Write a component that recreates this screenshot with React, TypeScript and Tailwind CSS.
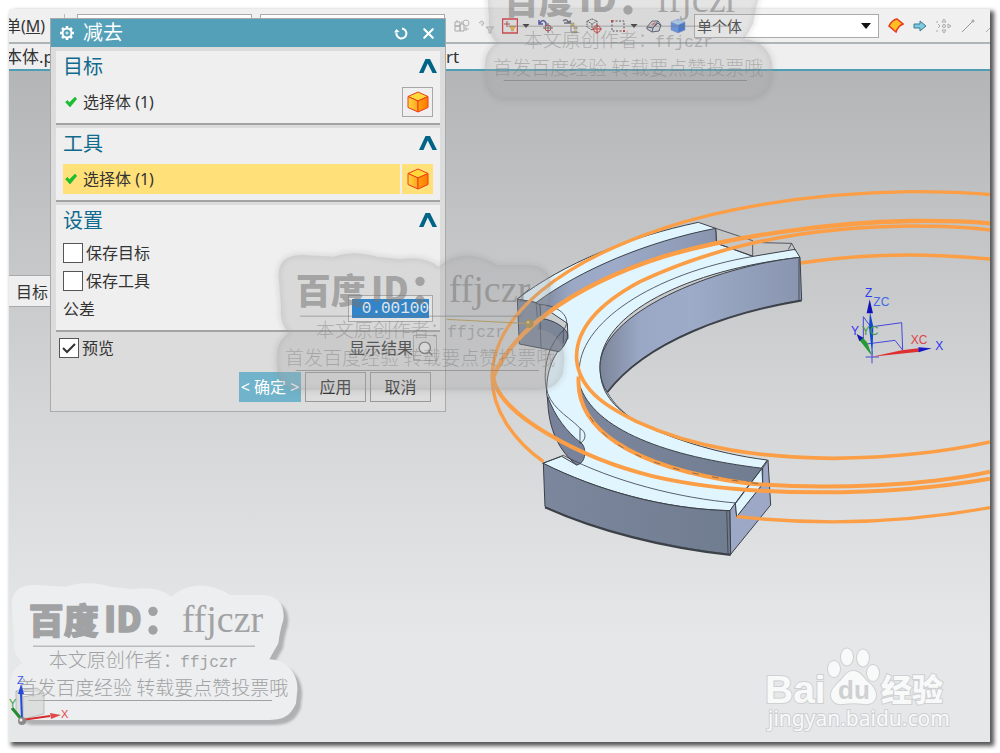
import type { ReactNode } from 'react'
import { Search, X } from 'lucide-react'

const ToolButton = ({ label, caret, children }: { label: string; caret?: boolean; children: ReactNode }) => {
  return (
    <button aria-label={label} className="flex items-center gap-1 shrink-0">
      <svg viewBox="0 0 16 16" className="size-4" fill="none">{children}</svg>
      {caret && <svg viewBox="0 0 7 4" className="w-2 h-1" fill="#222"><path d="M0 0h7L3.5 4z" /></svg>}
    </button>
  )
}

const Cube = () => (
  <svg viewBox="0 0 22 22" className="size-[22px]" stroke="#ee3c1c" strokeWidth="1" strokeLinejoin="round">
    <defs>
      <linearGradient id="cube-left"><stop stopColor="#ffd640" /><stop offset="1" stopColor="#ffa51c" /></linearGradient>
      <linearGradient id="cube-right"><stop stopColor="#ffa010" /><stop offset="1" stopColor="#ff7a00" /></linearGradient>
    </defs>
    <path d="M11 1 21 5.500 11 10 1 5.500z" fill="#ffd83a" />
    <path d="M1 5.500 11 10V21L1 16.500z" fill="url(#cube-left)" />
    <path d="M21 5.500 11 10V21l10-4.500z" fill="url(#cube-right)" />
  </svg>
)

const Tick = () => (
  <svg viewBox="0 0 12 11" className="w-3 h-3 ml-0.5 shrink-0">
    <path d="M.5 5.500 2.500 4 4.500 6 10 .500 11.700 2.500 5 10.500z" fill="#17c22e" stroke="#10a827" strokeWidth=".5" />
  </svg>
)

const Section = ({ title, children }: { title: string; children: ReactNode }) => {
  return (
    <section className="bg-[#efefef] border-b-2 border-[#a3a3a3] px-[7px]">
      <h2 className="flex items-start justify-between h-8 text-[20px] leading-8 text-[#0f6a8d]">
        {title}
        <button aria-label={title} className="mt-2 -mr-1">
          <svg viewBox="0 0 18 14" className="block w-[18px] h-[14px]" fill="#006487"><path d="M0 14 6.500 0h4.500L18 14h-4.500L8.700 4.500 4.500 14z" /></svg>
        </button>
      </h2>
      {children}
    </section>
  )
}

const Watermark = ({ place, solid }: { place: string; solid?: boolean }) => {
  const edge = 'M35 110C35 60 60 45 110 45L200 50Q260 30 330 50L400 58Q470 45 515 80Q560 40 620 48Q660 55 690 75L790 75C840 80 855 110 850 150Q840 180 835 220L808 268C860 270 895 310 892 360L888 400C870 440 850 450 800 450L80 450C40 440 25 400 30 340C30 310 50 290 65 278C40 250 40 220 42 200Z'
  return (
    <svg viewBox="0 0 960 549" className={`absolute w-80 h-[183px] pointer-events-none ${place}`}>
      {solid
        ? <g><path d={edge} fill="#b0b1b3" transform="translate(14 15)" className="blur-[3px]" /><path d={edge} fill="#edeeef" /></g>
        : <g><path d={edge} fill="none" stroke="#808080" strokeOpacity=".16" strokeWidth="14" className="blur-[6px]" /><path d={edge} fill="#a4a4a4" fillOpacity=".3" /></g>}
      <g fill={solid ? '#a1a2a4' : '#777'} fillOpacity={solid ? 1 : 0.55}>
        <g fontSize="105" fontWeight="900" className="font-['Noto_Sans_CJK_SC',sans-serif]" stroke={solid ? '#a1a2a4' : 'none'} strokeWidth="4" strokeLinejoin="round">
          <text x="86" y="192">百度</text>
          <text x="312" y="187">ID</text>
        </g>
        <circle cx="459" cy="124" r="14" />
        <circle cx="459" cy="180" r="14" />
        <text x="545" y="187" fontSize="114" className="font-['Liberation_Serif',serif]">ffjczr</text>
        <rect x="99" y="227" width="666" height="3" />
        <rect x="86" y="390" width="730" height="3" />
        <g fontSize="57" fontWeight="300" fillOpacity={solid ? 1 : 0.45} className="font-['Noto_Sans_CJK_SC',sans-serif]">
          <text x="146" y="292">本文原创作者：</text>
          <text x="541" y="292" fontSize="48" className="font-['Liberation_Mono',monospace]">ffjczr</text>
          <text x="54" y="375">首发百度经验 转载要点赞投票哦</text>
        </g>
      </g>
    </svg>
  )
}

const Model = () => {
  return (
    <svg viewBox="0 0 981 671" preserveAspectRatio="xMidYMid slice" className="absolute inset-0 size-full" fill="none">
      <defs>
        <linearGradient id="wall"><stop stopColor="#7c8599" /><stop offset=".2" stopColor="#9aa8c5" /><stop offset=".45" stopColor="#9dabc8" /><stop offset="1" stopColor="#8995af" /></linearGradient>
        <linearGradient id="front"><stop stopColor="#7c879d" /><stop offset="1" stopColor="#707c90" /></linearGradient>
      </defs>
      <g transform="translate(471 109) scale(.33333)" strokeLinejoin="round">
        <path d="M962 249C1070 232 1180 225 1290 225C1380 225 1460 231 1530 237" stroke="#fb9e46" strokeWidth="10" />
        {/* body */}
        <g stroke="#3c4148" strokeWidth="3">
          <path d="M655 127C450 170 250 250 112 357L170 368L262 430L264 475C235 510 198 550 200 640C210 720 250 780 305 790L290 855L245 829L188 850C350 930 550 987 750 992L862 840C700 820 560 770 470 725C400 680 360 640 360 560C360 400 620 270 960 232L945 208L820 229L710 190L707 145Z" fill="#e1f5fe" />
          <path d="M168 368C300 270 500 185 707 145L709 187C520 225 330 310 200 400L180 415Z" fill="url(#wall)" />
          <path d="M112 358 165 367 180 375 182 415C220 420 255 440 263 462C264 480 252 500 237 515L118 492Z" fill="#7c8699" />
          <path d="M168 368 172 412M180 415 183 502M250 450 250 490" strokeWidth="2" />
          <path d="M960 232C700 260 360 400 360 560C360 595 370 620 382 637C500 480 750 395 965 360Z" fill="url(#wall)" />
          <path d="M298 612C340 750 560 830 848 865L846 912C600 880 400 830 330 710C305 670 295 640 298 612Z" fill="url(#front)" />
          <path d="M203 650C225 710 260 755 303 789C320 800 320 850 290 855C240 815 203 750 203 650Z" fill="#78829a" />
          <path d="M190 850C350 930 550 988 750 992L752 1123C550 1100 350 1050 195 980Z" fill="url(#front)" />
          <path d="M750 992 766 969 770 1010 848 912 848 864 864 840 872 975 752 1123Z" fill="#9ca8c5" />
          <path d="M766 969 846 865 848 912 770 1010Z" fill="#e1f5fe" />
        </g>
        <g stroke="#3c4148" strokeWidth="2.500">
          <path d="M180 373C230 378 262 400 260 430C255 455 235 455 210 510C195 550 190 600 203 640C220 690 280 720 300 745V790M300 745C320 755 320 780 300 790" />
          <path d="M820 229C520 280 290 430 298 580V615" />
          <path d="M707 145 818 182V229L710 190M845 188 935 190 925 208M935 190 945 208V212M957 235V360" />
          <path d="M188 850 250 826C400 905 600 955 768 969M740 990 744 1120M846 865 768 969M112 357 150 325" />
          <path d="M195 982C350 1052 550 1104 752 1125" strokeWidth="6" />
          <path d="M382 637C500 482 750 398 965 362" strokeWidth="5" />
          <path d="M382 637C400 670 435 705 470 725" />
        </g>
        {/* cutting ring */}
        <g stroke="#fb9e46" strokeWidth="10">
          <path d="M1530 44C1450 36 1370 35 1290 35C950 40 700 95 550 145C250 245 40 400 36 590C36 690 100 780 190 845" />
          <path d="M1530 130C1450 123 1370 122 1290 123C1050 127 750 170 550 230C250 325 90 470 40 590" strokeWidth="13" />
          <path d="M40 590C50 700 300 835 520 889C680 926 850 937 1020 937C1200 937 1380 922 1530 896" strokeWidth="12" />
          <path d="M1530 150C1450 140 1370 138 1290 138C900 142 650 225 480 305C340 380 285 460 290 540C300 640 400 690 470 725C650 808 850 833 1060 835C1230 833 1400 815 1530 786" strokeWidth="11" />
          <path d="M296 590C285 740 440 860 800 910C1050 932 1350 915 1530 875" strokeWidth="12" />
          <path d="M770 1010C1050 1040 1300 1025 1530 983" />
        </g>
        <path d="M330 710C400 830 600 885 846 912" stroke="#555" strokeWidth="2" strokeDasharray="20 40" />
        <path d="M-100 418 148 431" stroke="#b4974a" strokeWidth="3" />
        <circle cx="148" cy="431" r="13" fill="#a88c42" />
        <circle cx="144" cy="427" r="4" fill="#d8c38a" />
        {/* coordinate system */}
        <g stroke="#4646dc" strokeWidth="3">
          <path d="M1178 440 1265 428 1268 510 1245 481 1160 492 1150 485V410L1168 435M1157 531H1197M1176 513V550" />
        </g>
        <path d="M1170 395 1180 440 1177 530 1167 440Z" fill="#1048d0" />
        <path d="M1169 358 1179 400H1160Z" fill="#1212b8" />
        <path d="M1176 530 1265 511 1315 505 1318 515Z" fill="#de3030" />
        <path d="M1315 502 1355 505 1316 517Z" fill="#1616c8" />
        <path d="M1176 528 1138 480 1149 473 1162 488Z" fill="#279a35" />
        <path d="M1130 462 1150 473 1138 484Z" fill="#1616a8" />
        <g fontSize="36" className="font-['Liberation_Sans',sans-serif]">
          <text x="1155" y="351" fill="#2e3cf0">Z</text>
          <text x="1180" y="378" fill="#3f68e8">ZC</text>
          <text x="1113" y="465" fill="#3333f0">Y</text>
          <text x="1145" y="465" fill="#3f9a48">YC</text>
          <text x="1292" y="491" fill="#dc4545">XC</text>
          <text x="1366" y="511" fill="#3333f0">X</text>
        </g>
      </g>
    </svg>
  )
}

const CornerAxes = () => (
  <svg viewBox="0 0 70 60" className="absolute left-[9px] bottom-[18px] w-[70px] h-[60px] overflow-hidden">
    <path d="M7 16 28 13 35 18V39L14 44 7 38Z M7 16 14 22 35 18M14 22V44" fill="#ccc" fillOpacity=".5" stroke="#aaa" strokeWidth=".7" />
    <path d="M13 45 12 18" stroke="#2448d8" strokeWidth="2" />
    <path d="m12 9 3 10H9z" fill="#2448d8" />
    <path d="m13 45-10-12" stroke="#238a32" strokeWidth="3" />
    <path d="m13 45 28-4" stroke="#d82c2c" strokeWidth="2" />
    <path d="m41 38 11 2-10 4z" fill="#e04a4a" />
    <circle cx="13" cy="46" r="4" fill="#8a8a8a" />
    <circle cx="12" cy="45" r="1.500" fill="#eee" />
    <g fontSize="11" className="font-['Liberation_Sans',sans-serif]">
      <text x="8" y="9" fill="#3656f0">Z</text>
      <text x="0" y="32" fill="#36a044">Y</text>
      <text x="52" y="43" fill="#e64848">X</text>
    </g>
  </svg>
)

const BaiduLogo = () => (
  <svg viewBox="0 0 200 90" className="absolute right-[34px] bottom-[10px] w-[200px] h-[90px]" fill="#f8f9f9" stroke="#cfd0d2" strokeWidth="2" paintOrder="stroke">
    <ellipse cx="78" cy="27" rx="6" ry="8" />
    <ellipse cx="91" cy="15" rx="6" ry="8.500" />
    <ellipse cx="107" cy="16" rx="6" ry="8.500" />
    <ellipse cx="117" cy="31" rx="6" ry="8" />
    <path d="M97 29c8 0 10 7 15 11 5 4 8 8 8 13 0 7-6 10-12 9-7-1-14-1-21 0-7 1-12-3-12-9 0-5 4-9 8-13 5-4 7-11 14-11z" />
    <g className="font-['Noto_Sans_CJK_SC',sans-serif]" fontWeight="700">
      <text x="9" y="61" fontSize="39" className="font-['Liberation_Sans',sans-serif]">Bai</text>
      <text x="82" y="57" fontSize="26" fill="#cfd0d2" stroke="none" className="font-['Liberation_Sans',sans-serif]">du</text>
      <text x="125" y="59" fontSize="31" fontWeight="900">经验</text>
    </g>
    <text x="12" y="84" fontSize="21" className="font-['Noto_Sans',sans-serif]">jingyan.baidu.com</text>
  </svg>
)

const Dialog = () => {
  return (
    <div role="dialog" aria-label="减去" className="absolute left-[41px] top-[9px] w-[396px] bg-[#dcdcdc] border border-[#a8aaab] text-[16px] leading-5 text-[#333]">
      <div className="flex items-center h-7 px-2 bg-[#54a0b9] text-white">
        <svg viewBox="0 0 16 16" className="size-4" fill="none" stroke="#fff">
          <circle cx="8" cy="8" r="4.500" strokeWidth="2" />
          <circle cx="8" cy="8" r="1" strokeWidth="1" />
          <path d="M8 1v2M8 13v2M1 8h2M13 8h2M3 3l1.500 1.500M11.500 11.500 13 13M13 3l-1.500 1.500M4.500 11.500 3 13" strokeWidth="2.500" />
        </svg>
        <h1 className="flex-1 ml-2 text-[20px] leading-7">减去</h1>
        <button aria-label="重置" className="mr-3">
          <svg viewBox="0 0 14 14" className="size-[14px]" fill="none" stroke="#fff" strokeWidth="2"><path d="M8 2.500a5 5 0 1 1-5.500 4" /><path d="M0 6.500 2.500 3 5.500 6z" fill="#fff" stroke="none" /></svg>
        </button>
        <button aria-label="关闭"><X size={17} strokeWidth={3} /></button>
      </div>
      <div className="flex flex-col gap-[3px] px-[5px] pt-1">
        <Section title="目标">
          <div className="flex items-center h-[30px] mt-1 mb-[6px]">
            <Tick />
            <span className="flex-1 ml-[6px]">选择体 (1)</span>
            <button aria-label="选择目标体" className="grid place-items-center w-[31px] h-[30px] border border-[#a8a8a8]"><Cube /></button>
          </div>
        </Section>
        <Section title="工具">
          <div className="flex items-center gap-[2px] h-[30px] mt-1 mb-[6px]">
            <div className="flex flex-1 items-center h-full bg-[#ffe079]">
              <Tick />
              <span className="ml-[6px]">选择体 (1)</span>
            </div>
            <button aria-label="选择工具体" className="grid place-items-center w-[31px] h-full bg-[#ffe079]"><Cube /></button>
          </div>
        </Section>
        <Section title="设置">
          <div className="flex flex-col gap-2 pt-[6px]">
            <label className="flex items-center gap-[3px]"><input type="checkbox" className="appearance-none size-5 border border-[#555] bg-white" />保存目标</label>
            <label className="flex items-center gap-[3px]"><input type="checkbox" className="appearance-none size-5 border border-[#555] bg-white" />保存工具</label>
          </div>
          <div className="flex items-center justify-between mt-1 mb-2">
            <label htmlFor="tolerance">公差</label>
            <div className="w-[85px] h-[27px] p-[3px] border border-[#a8a8a8] bg-white">
              <input id="tolerance" defaultValue="0.00100" className="block w-full h-[19px] bg-[#0078d7] text-white text-right text-[16px] leading-5 font-['Liberation_Mono',monospace]" />
            </div>
          </div>
        </Section>
      </div>
      <div className="flex items-center justify-between h-8 pl-2 pr-2">
        <label className="flex items-center gap-[3px]">
          <span className="relative size-5">
            <input type="checkbox" defaultChecked className="block appearance-none size-5 border border-[#555] bg-white" />
            <svg viewBox="0 0 20 20" className="absolute inset-0 pointer-events-none" fill="none" stroke="#333" strokeWidth="2"><path d="m4 10 4 4 8-8" /></svg>
          </span>
          预览
        </label>
        <div className="flex items-center">
          显示结果
          <button aria-label="显示结果" className="grid place-items-center w-6 h-[26px] border border-[#aaa]"><Search size={17} strokeWidth={2} color="#777" fill="#eee" /></button>
        </div>
      </div>
      <div className="flex justify-end gap-1 mt-2 mb-[9px] pr-[14px]">
        <button className="w-[62px] h-[30px] bg-[#70b3ca] text-white whitespace-nowrap">&lt; 确定 &gt;</button>
        <button className="w-[61px] h-[30px] border border-[#999]">应用</button>
        <button className="w-[61px] h-[30px] border border-[#999]">取消</button>
      </div>
    </div>
  )
}

const Toolbar = () => {
  return (
    <div className="flex items-center h-[35px] border-b-2 border-[#adb5b8] bg-[#f0f0f0] overflow-hidden">
      <button className="w-[55px] -ml-1 text-left text-[16px] shrink-0">单(<u>M</u>)</button>
      <div className="w-px h-6 ml-1 bg-[#bbb] shrink-0" />
      <input aria-label="过滤器" className="w-[175px] h-6 ml-3 border border-[#aaa] bg-white shrink-0" />
      <input aria-label="范围" className="w-[185px] h-6 ml-2 border border-[#aaa] bg-white shrink-0" />
      <div className="flex items-center gap-2 ml-[9px] shrink-0">
        <ToolButton label="装配">
          <path d="M1 4h5v4H1zM1 8h5v5H1zM6 6h4v7H6zM3 2v2M8 3v3" stroke="#aaa" />
          <circle cx="12" cy="5" r="3" stroke="#b5b5b5" /><path d="M12 8v5M10 11h5" stroke="#b5b5b5" />
        </ToolButton>
        <ToolButton label="过滤">
          <path d="M1 5q3-4 5 0L4 8M8 9h8l-3 3v3h-2v-3z" stroke="#b5b5b5" fill="#ddd" />
        </ToolButton>
        <ToolButton label="选择过滤" caret>
          <path d="M.5 1h15v14H.5z" stroke="#d5232f" strokeWidth="1.500" />
          <path d="M5 3v6M2 6h6" stroke="#a33" /><path d="M7 8h7l-2.500 3v2h-2v-2z" fill="#f5b52b" stroke="#b87a18" strokeWidth=".5" />
        </ToolButton>
        <ToolButton label="重置方位">
          <path d="M2 5q3-5 6 0v3M1 2v4h4" stroke="#32389a" strokeWidth="1.500" /><circle cx="10" cy="10" r="3" stroke="#c22" /><path d="M10 5v10M5 10h10" stroke="#555" />
        </ToolButton>
        <ToolButton label="选择优先">
          <path d="M1 3q3-3 5 1l3-1M2 5h7" stroke="#556" strokeWidth="1.500" /><path d="M9 5h3v3H9zM12 9h3v2h-3zM12 13h3v2h-3z" fill="#e8c33c" stroke="#777" strokeWidth=".6" /><path d="M9 8v6h3" stroke="#777" />
        </ToolButton>
        <ToolButton label="旋转点">
          <path d="m6 1 5 2v6l-5 3-5-3V3zM1 3l5 3 5-3M6 6v6" stroke="#333" strokeDasharray="1.500 1" /><circle cx="11" cy="11" r="3.500" stroke="#c22" /><path d="M11 6v10M6 11h10" stroke="#c22" />
        </ToolButton>
        <ToolButton label="矩形选择" caret>
          <path d="M2 3h12v10H2z" stroke="#333" strokeDasharray="2 1.500" /><path d="M1 2h2v2H1zM13 12h2v2h-2z" fill="#d22" />
        </ToolButton>
        <ToolButton label="渲染样式">
          <path d="M1 9 6 3l6 0 3 4-2 6-7 1-5-3z" fill="#d8dbe4" stroke="#444a5c" /><path d="m1 9 6 1 5-7M7 10l-1 4M7 10l5-5 3 3" stroke="#444a5c" /><path d="m7 5 3-1-2 3-3 0z" fill="#d66" />
        </ToolButton>
        <ToolButton label="着色">
          <path d="M8 1 15 4 8 7 1 4z" fill="#a8d4f8" /><path d="M1 4 8 7v8l-7-3z" fill="#4f8cf0" /><path d="m15 4-7 3v8l7-3z" fill="#2468d8" /><path d="M8 1 15 4 8 7 1 4zV4M1 4v8l7 3 7-3V4M8 7v8" stroke="#7a86c8" strokeWidth=".5" />
        </ToolButton>
      </div>
      <div className="relative w-[185px] ml-2 shrink-0">
        <select aria-label="选择范围" className="block appearance-none w-full h-6 pl-0.5 border border-[#aaa] bg-white text-[15px] leading-5 text-[#333]"><option>单个体</option></select>
        <svg viewBox="0 0 10 6" className="absolute right-2 top-[9px] w-[10px] h-[6px] pointer-events-none"><path d="M0 0h10L5 6z" fill="#111" /></svg>
      </div>
      <div className="flex items-center gap-2 ml-[9px] shrink-0">
        <ToolButton label="面"><path d="M1 8Q4 2 9 1l6 5q-5 2-7 8z" fill="#ffbe24" stroke="#e63a1c" strokeWidth="1.500" /></ToolButton>
        <ToolButton label="下一个"><path d="M2 6h6V3l6 5-6 5v-3H2z" fill="#7ecbe0" stroke="#3c7890" /></ToolButton>
        <ToolButton label="移动"><path d="M8 1 10 4H6zM8 15l2-3H6zM15 8l-3-2v4zM4 8 2 6M4 8l-2 2M1 3v2M1 12v2" stroke="#aaa" /><circle cx="8" cy="8" r="1.500" stroke="#aaa" /></ToolButton>
        <ToolButton label="直线"><path d="M2 14 13 3" stroke="#999" /><circle cx="13" cy="3" r="1.500" fill="#aaa" /></ToolButton>
        <ToolButton label="曲线"><path d="M2 14 14 2" stroke="#aaa" /></ToolButton>
      </div>
    </div>
  )
}

const App = () => {
  return (
    <div className="relative min-h-screen flex flex-col overflow-hidden bg-white pt-[9px] pl-[9px] pr-[10px] pb-[11px] text-[#333] font-['Noto_Sans','Noto_Sans_CJK_SC',sans-serif]">
      <div className="relative flex flex-1 flex-col rounded-tl-sm shadow-[3px_3px_4px_1px_#555]">
        <Toolbar />
        <div className="flex items-center h-[27px] border-b-2 border-[#4d9db4] bg-[#efefef] text-[17px] overflow-hidden">
          <span className="w-[426px] -ml-1 shrink-0">本体.p</span>
          <span>.prt</span>
        </div>
        <main className="relative flex-1 overflow-hidden bg-linear-to-b from-[#b4b5b7] via-[#d4d5d7] to-[#e6e7e9] to-85%">
          <Model />
          <div className="absolute left-0 top-[204px] w-[42px] h-8 pl-[7px] border-y border-[#aaa] bg-[#efefef] text-[16px] leading-8">目标</div>
          <BaiduLogo />
        </main>
        <Dialog />
      </div>
      <Watermark place="left-[475px] -top-[50px]" />
      <Watermark place="left-[267px] top-[240px]" />
      <Watermark place="left-0 bottom-0" solid />
      <CornerAxes />
    </div>
  )
}

export default App
